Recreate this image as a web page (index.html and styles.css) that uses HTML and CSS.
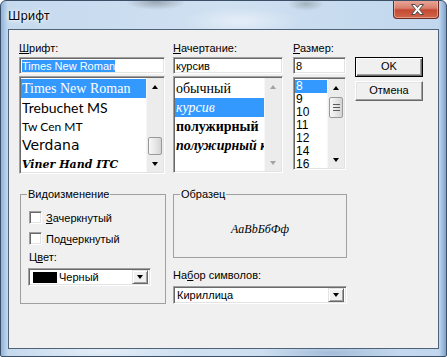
FILE: index.html
```html
<!DOCTYPE html>
<html>

<head>
    <meta charset="UTF-8">
    <title>Шрифт</title>
    <link rel="stylesheet" href="styles.css">
</head>

<body>

    <div class="window">
        <div class="titlebar">
            <span class="title">Шрифт</span>
            <div class="close-btn">
                <svg width="46" height="19" viewBox="0 0 46 19">
                    <path d="M18.5 4.5 h3.6 l2.4 3 l2.4 -3 h3.6 l-4.1 5 l4.1 5 h-3.6 l-2.4 -3 l-2.4 3 h-3.6 l4.1 -5 z"
                        fill="#ffffff" stroke="#4a4a4a" stroke-width="1" stroke-linejoin="round" />
                </svg>
            </div>
        </div>

        <div class="client">
            <div class="top-row">
                <div class="col col-font">
                    <div class="lbl"><u>Ш</u>рифт:</div>
                    <div class="edit sunken"><span class="sel">Times New Roman</span></div>
                    <div class="listbox sunken list-font">
                        <div class="items">
                            <div class="item f-times selected">Times New Roman</div>
                            <div class="item f-trebuchet">Trebuchet MS</div>
                            <div class="item f-twcen">Tw Cen MT</div>
                            <div class="item f-verdana">Verdana</div>
                            <div class="item f-viner">Viner Hand ITC</div>
                        </div>
                        <div class="vscroll">
                            <div class="arrow"><span class="tri up"></span></div>
                            <div class="track"><div class="thumb thumb-font"></div></div>
                            <div class="arrow"><span class="tri down"></span></div>
                        </div>
                    </div>
                </div>

                <div class="col col-style">
                    <div class="lbl"><u>Н</u>ачертание:</div>
                    <div class="edit sunken">курсив</div>
                    <div class="listbox sunken list-style">
                        <div class="items">
                            <div class="item f-times">обычный</div>
                            <div class="item f-times italic selected">курсив</div>
                            <div class="item f-times bold">полужирный</div>
                            <div class="item f-times bold italic">полужирный курсив</div>
                        </div>
                        <div class="vscroll disabled">
                            <div class="arrow"><span class="tri up"></span></div>
                            <div class="track"></div>
                            <div class="arrow"><span class="tri down"></span></div>
                        </div>
                    </div>
                </div>

                <div class="col col-size">
                    <div class="lbl"><u>Р</u>азмер:</div>
                    <div class="edit sunken">8</div>
                    <div class="listbox sunken list-size">
                        <div class="items">
                            <div class="item size selected">8</div>
                            <div class="item size">9</div>
                            <div class="item size">10</div>
                            <div class="item size">11</div>
                            <div class="item size">12</div>
                            <div class="item size">14</div>
                            <div class="item size">16</div>
                        </div>
                        <div class="vscroll">
                            <div class="arrow"><span class="tri up"></span></div>
                            <div class="track">
                                <div class="thumb thumb-size">
                                    <span class="grip"></span>
                                    <span class="grip"></span>
                                    <span class="grip"></span>
                                </div>
                            </div>
                            <div class="arrow"><span class="tri down"></span></div>
                        </div>
                    </div>
                </div>

                <div class="buttons">
                    <div class="btn default">OK</div>
                    <div class="btn">Отмена</div>
                </div>
            </div>

            <div class="bottom-row">
                <fieldset class="group group-effects">
                    <legend>Видоизменение</legend>
                    <div class="check-row first">
                        <span class="checkbox sunken"></span>
                        <span><u>З</u>ачеркнутый</span>
                    </div>
                    <div class="check-row">
                        <span class="checkbox sunken"></span>
                        <span>Под<u>ч</u>еркнутый</span>
                    </div>
                    <div class="lbl color-lbl">Ц<u>в</u>ет:</div>
                    <div class="combo sunken combo-color">
                        <span class="swatch"></span>
                        <span class="combo-text">Черный</span>
                        <span class="drop"><span class="tri down"></span></span>
                    </div>
                </fieldset>

                <div class="right-col">
                    <fieldset class="group group-sample">
                        <legend>Образец</legend>
                        <div class="sample">AaBbБбФф</div>
                    </fieldset>
                    <div class="lbl charset-lbl">На<u>б</u>ор символов:</div>
                    <div class="combo sunken combo-charset">
                        <span class="combo-text">Кириллица</span>
                        <span class="drop"><span class="tri down"></span></span>
                    </div>
                </div>
            </div>
        </div>
    </div>

</body>

</html>
```

FILE: styles.css
```css
body {
    margin: 0;
    padding: 0;
    font-family: "Liberation Sans", Arial, sans-serif;
    font-size: 11px;
    color: #000000;
}

.window {
    width: 447px;
    height: 357px;
    box-sizing: border-box;
    border: 1px solid #3b4f66;
    border-radius: 6px 6px 2px 2px;
    overflow: hidden;
    background:
        radial-gradient(ellipse 30px 8px at 155px 1px, rgba(60, 60, 60, 0.35), transparent),
        radial-gradient(ellipse 18px 7px at 305px 3px, rgba(70, 80, 70, 0.3), transparent),
        radial-gradient(ellipse 60px 14px at 240px 20px, rgba(255, 255, 255, 0.45), transparent),
        radial-gradient(ellipse 90px 12px at 100px 350px, rgba(255, 255, 255, 0.5), transparent),
        radial-gradient(ellipse 70px 10px at 330px 352px, rgba(120, 150, 190, 0.45), transparent),
        linear-gradient(to right, #8fb3dc 0, #c6daee 7px, #cfe0f1 50%, #c1d7ed calc(100% - 7px), #7ea3d0 100%);
}

.titlebar {
    height: 28px;
    display: flex;
    justify-content: space-between;
    align-items: flex-start;
}

.title {
    padding: 7px 0 0 7px;
    font-family: "Noto Sans", "Open Sans", sans-serif;
    font-size: 12px;
    line-height: 15px;
    text-shadow: 0 0 6px #ffffff, 0 0 3px #ffffff;
}

.close-btn {
    width: 46px;
    height: 19px;
    margin: -1px 7px 0 0;
    box-sizing: border-box;
    border: 1px solid #6b2a22;
    border-top: none;
    border-radius: 0 0 4px 4px;
    background: linear-gradient(to bottom, #e9a99c 0, #d9806f 45%, #c44a32 55%, #d0654a 100%);
    box-shadow: inset 0 0 0 1px rgba(255, 220, 210, 0.45);
}

.close-btn svg {
    display: block;
    margin-left: -1px;
}

.client {
    margin: 0 7px;
    height: 320px;
    box-sizing: border-box;
    border: 1px solid #4e6379;
    background-color: #f0f0f0;
    padding: 12px 0 0 10px;
}

.top-row {
    display: flex;
    align-items: flex-start;
}

.col-font {
    width: 146px;
    margin-right: 8px;
}

.col-style {
    width: 110px;
    margin-right: 10px;
}

.col-size {
    width: 53px;
    margin-right: 9px;
}

.lbl {
    height: 13px;
    line-height: 13px;
}

.sunken {
    box-sizing: border-box;
    background-color: #ffffff;
    border: 1px solid;
    border-color: #a0a0a0 #ffffff #ffffff #a0a0a0;
    box-shadow: inset 1px 1px #696969, inset -1px -1px #e3e3e3;
}

.edit {
    margin-top: 2px;
    height: 17px;
    padding: 2px 0 0 2px;
    line-height: 13px;
    white-space: nowrap;
}

.sel {
    background-color: #3399ff;
    color: #ffffff;
}

.listbox {
    display: flex;
    margin-top: 2px;
    padding: 1px;
}

.list-font {
    height: 98px;
}

.list-style {
    height: 97px;
}

.list-size {
    height: 93px;
    margin-top: 3px;
}

.items {
    flex: 1;
    min-width: 0;
    overflow: hidden;
    padding-top: 1px;
}

.item {
    height: 19px;
    line-height: 19px;
    padding-left: 1px;
    white-space: nowrap;
    overflow: hidden;
}

.item.selected {
    background-color: #3399ff;
    color: #ffffff;
}

.f-times {
    font-family: "Liberation Serif", "Times New Roman", serif;
    font-size: 14px;
}

.f-trebuchet {
    font-family: Lato, sans-serif;
    font-size: 14px;
}

.f-twcen {
    font-family: Lato, sans-serif;
    font-size: 12px;
}

.f-verdana {
    font-family: "DejaVu Sans", Verdana, sans-serif;
    font-size: 14px;
}

.f-viner {
    font-family: "DejaVu Serif", serif;
    font-style: italic;
    font-weight: bold;
    font-size: 11px;
}

.italic {
    font-style: italic;
}

.bold {
    font-weight: bold;
}

.item.size {
    height: 13px;
    line-height: 13px;
    font-size: 12px;
    padding-left: 1px;
}

.vscroll {
    width: 17px;
    flex-shrink: 0;
    display: flex;
    flex-direction: column;
    background-color: #ececec;
    border-left: 1px solid #f7f7f7;
    box-sizing: border-box;
}

.arrow {
    height: 17px;
    display: flex;
    justify-content: center;
    align-items: center;
}

.track {
    flex: 1;
}

.tri {
    width: 0;
    height: 0;
    border-left: 3.5px solid transparent;
    border-right: 3.5px solid transparent;
}

.tri.up {
    border-bottom: 4px solid #000000;
}

.tri.down {
    border-top: 4px solid #000000;
}

.disabled .tri.up {
    border-bottom-color: #a3a3a3;
}

.disabled .tri.down {
    border-top-color: #a3a3a3;
}

.thumb {
    margin: 0 1px;
    box-sizing: border-box;
    border: 1px solid #9a9a9a;
    border-radius: 2px;
    background: linear-gradient(to right, #f7f7f7, #e4e4e4 60%, #d3d3d3);
}

.thumb-font {
    height: 18px;
    margin-top: 42px;
}

.thumb-size {
    height: 21px;
    margin-top: 1px;
    display: flex;
    flex-direction: column;
    justify-content: center;
    align-items: center;
    gap: 2px;
}

.grip {
    width: 7px;
    height: 1px;
    background-color: #5b5b5b;
}

.buttons {
    width: 68px;
    margin-top: 15px;
    display: flex;
    flex-direction: column;
    gap: 4px;
}

.btn {
    height: 20px;
    box-sizing: border-box;
    line-height: 16px;
    text-align: center;
    background-color: #f0f0f0;
    border: 1px solid;
    border-color: #ffffff #696969 #696969 #ffffff;
    box-shadow: inset -1px -1px #a0a0a0, inset 1px 1px #e3e3e3;
}

.btn.default {
    border: 1px solid #000000;
    box-shadow: inset 1px 1px #ffffff, inset -1px -1px #696969, inset -2px -2px #a0a0a0;
}

.bottom-row {
    display: flex;
    align-items: flex-start;
    margin-top: 14px;
}

.group {
    margin: 0;
    box-sizing: border-box;
    border: 1px solid #a0a0a0;
    padding: 0 8px;
    min-width: 0;
}

.group legend {
    margin-left: -2px;
    padding: 0 1px;
    line-height: 13px;
}

.group-effects {
    width: 146px;
    height: 116px;
    margin-left: 1px;
}

.check-row {
    display: flex;
    align-items: center;
    height: 13px;
    margin-top: 8px;
}

.check-row.first {
    margin-top: 10px;
}

.checkbox {
    width: 13px;
    height: 13px;
    margin-right: 4px;
    flex-shrink: 0;
}

.color-lbl {
    margin-top: 6px;
}

.combo {
    display: flex;
    align-items: center;
    height: 18px;
    margin-top: 4px;
    padding: 2px;
}

.combo-color {
    width: 123px;
    margin-left: -1px;
}

.swatch {
    width: 24px;
    height: 11px;
    margin-left: 2px;
    background-color: #000000;
}

.combo-text {
    flex: 1;
    margin-left: 2px;
    line-height: 13px;
}

.combo-charset .combo-text {
    margin-left: 1px;
}

.drop {
    width: 16px;
    height: 14px;
    box-sizing: border-box;
    display: flex;
    justify-content: center;
    align-items: center;
    background-color: #f0f0f0;
    border: 1px solid;
    border-color: #e3e3e3 #696969 #696969 #e3e3e3;
    box-shadow: inset 1px 1px #ffffff, inset -1px -1px #a0a0a0;
}

.right-col {
    width: 174px;
    margin-left: 7px;
    display: flex;
    flex-direction: column;
}

.group-sample {
    height: 70px;
}

.sample {
    height: 56px;
    display: flex;
    justify-content: center;
    align-items: center;
    font-family: "Liberation Serif", "Times New Roman", serif;
    font-style: italic;
    font-size: 12px;
}

.charset-lbl {
    margin-top: 11px;
}

.combo-charset {
    width: 174px;
}
```
